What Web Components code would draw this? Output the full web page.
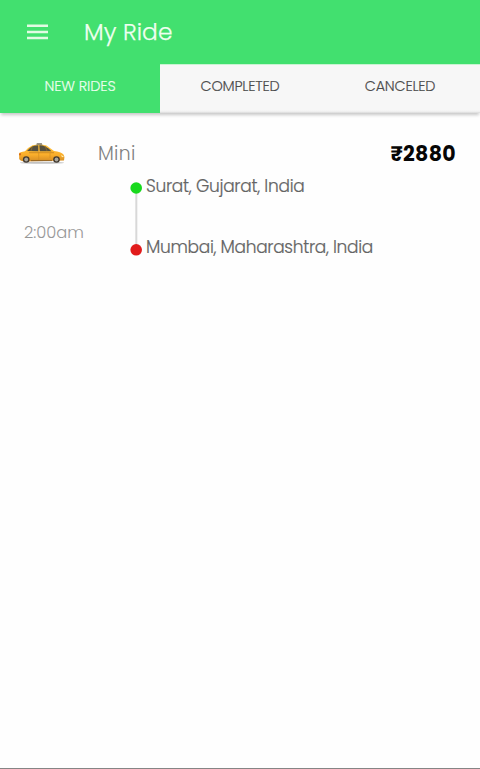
<!DOCTYPE html>
<html lang="en">
<head>
<meta charset="utf-8">
<title>My Ride</title>
<style>
html,body{margin:0;height:100%;background:#fefefe;overflow:hidden}
body{font-family:Poppins,Inter,"Noto Sans",sans-serif}
</style>
</head>
<body>
<ride-app></ride-app>
<script>
function define(name, html, setup) {
  const template = document.createElement('template');
  template.innerHTML = html;
  customElements.define(name, class extends HTMLElement {
    constructor() {
      super();
      this.attachShadow({mode: 'open'}).append(template.content.cloneNode(true));
    }
    connectedCallback() { if (setup) setup(this); }
  });
}

// A single line of text whose tracking is adjusted to fill the given width.
define('fit-text', `<style>
:host{display:block;white-space:nowrap;flex:none;line-height:24px}
span{display:inline-block}
</style><span><slot></slot></span>`, el => {
  const span = el.shadowRoot.querySelector('span');
  const target = Number(el.getAttribute('width'));
  const natural = span.getBoundingClientRect().width;
  const gap = (target - natural) / el.textContent.length;
  span.style.letterSpacing = gap.toFixed(3) + 'px';
  el.style.width = target + 'px';
});

define('app-bar', `<style>
:host{display:flex;align-items:center;height:64px;box-sizing:border-box;padding:0 27px;gap:36px;background:#42e06f;color:#effff0}
svg{display:block;width:21px;height:16px;flex:none}
fit-text{font-size:23.3px;font-weight:300;line-height:28px;-webkit-text-stroke:.25px}
</style>
<svg viewBox="0 0 21 16"><path d="M0 1.8h21M0 8h21M0 14.1h21" stroke="#e2fbe3" stroke-width="2.5"/></svg>
<fit-text width="88.5">My Ride</fit-text>`);

define('ride-tab', `<style>
:host{display:flex;flex:1;justify-content:center;align-items:flex-start;box-sizing:border-box;padding-top:10px;color:#4c4c4c;font-size:14.4px;font-weight:300;-webkit-text-stroke:.15px;background:#f7f7f7}
:host([active]){background:#42e06f;color:#ecffee}
</style><slot></slot>`);

define('ride-tabs', `<style>
:host{display:flex;height:49px;background:#f7f7f7;box-shadow:0 3px 3px -1px #c7c7c7}
ride-tab:not([active]){border-top:1px solid #c9f4d2;padding-top:9px;background:linear-gradient(#f7f7f7 45px,#ececec 47px,#d5d5d5)}
</style>
<ride-tab active><fit-text width="71">NEW RIDES</fit-text></ride-tab>
<ride-tab><fit-text width="79">COMPLETED</fit-text></ride-tab>
<ride-tab><fit-text width="70.5">CANCELED</fit-text></ride-tab>`);

define('taxi-icon', `<style>:host{display:block;width:48px;height:24px;flex:none}svg{display:block}</style>
<svg width="48" height="24" viewBox="0 0 48 24">
<defs><linearGradient id="g" x2="0" y2="1"><stop stop-color="#ffc33d"/><stop offset=".6" stop-color="#faae2b"/><stop offset="1" stop-color="#d28a24"/></linearGradient></defs>
<ellipse cx="24" cy="20.7" rx="22" ry="1" fill="#999" opacity=".6"/>
<path d="M1 11Q3 9.8 7 9.2Q10.5 5 14.5 3.2Q22 1.4 28.5 3.6L36 9Q43 9.8 45.5 12.5Q47.5 15.5 46 18.4L7 19.6Q2.4 19 1.2 17Z" fill="url(#g)"/>
<path d="M9 9Q12 5 16 3.7L20.3 3.3V9.2ZM21.3 3.3Q27 2.8 33.5 9.2L21.8 9.2Z" fill="#55503f"/>
<path d="M14.5 4L13 8.9M27 4L29 9" stroke="#8a6a2c" stroke-width=".9"/>
<path d="M18.8 1.2h5l.6 1.6H18.3Z" fill="#77705f"/>
<path d="M11 10.7H36" stroke="#c4831f" stroke-width=".8"/>
<path d="M20.7 9.5v8.5M32 11v5" stroke="#d08b21" stroke-width=".6" fill="none"/>
<path d="M13 18.6H34" stroke="#8d6225" stroke-width=".9"/>
<path d="M1 11.8l2-.8v2.2H1Z" fill="#d46720"/><path d="M43 13l3 1.5-2 .7Z" fill="#fff0b3"/>
<g fill="#40382f"><circle cx="8.2" cy="17.5" r="3.3"/><circle cx="38.5" cy="17.5" r="3.3"/></g>
<g fill="#aaa69c"><circle cx="8.2" cy="17.5" r="1.9"/><circle cx="38.5" cy="17.5" r="1.9"/></g>
</svg>`);

define('route-stops', `<style>
:host{display:grid;grid-template-columns:12px 1fr;column-gap:4px;color:#646464;font-size:17px;font-weight:300;-webkit-text-stroke:.2px}
svg{display:block;width:12px;height:76px;margin-top:6px}
.places{display:flex;flex-direction:column;gap:37px}
</style>
<svg viewBox="0 0 12 76"><path d="M6.3 8v61" stroke="#d8d8d8" stroke-width="2"/><circle cx="6.2" cy="8" r="5.8" fill="#18d91d"/><circle cx="6.2" cy="69.8" r="5.8" fill="#e11b1b"/></svg>
<div class="places"><fit-text width="158.5">Surat, Gujarat, India</fit-text><fit-text width="227">Mumbai, Maharashtra, India</fit-text></div>`);

define('ride-card', `<style>
:host{display:block;padding:29px 24px 0 18px}
.summary{display:flex;align-items:center;height:24px}
.kind{font-size:18.8px;font-weight:300;color:#808080;margin-left:32px}
.price{font-size:20.5px;font-weight:700;color:#060606;margin-left:auto}
.trip{display:flex;padding:8px 0 0 6px}
.time{font-size:16.3px;font-weight:300;color:#989898;margin-top:47px}
route-stops{margin:0 0 0 46px}
</style>
<div class="summary"><taxi-icon></taxi-icon><fit-text class="kind" width="37.5">Mini</fit-text><fit-text class="price" width="65.5">₹2880</fit-text></div>
<div class="trip"><fit-text class="time" width="60">2:00am</fit-text><route-stops></route-stops></div>`);

define('ride-app', `<style>
:host{display:flex;flex-direction:column;height:100vh;box-sizing:border-box;border-bottom:1px solid #858585;background:#fefefe}
ride-card{flex:1}
</style>
<app-bar></app-bar><ride-tabs></ride-tabs><ride-card></ride-card>`);
</script>
</body>
</html>
